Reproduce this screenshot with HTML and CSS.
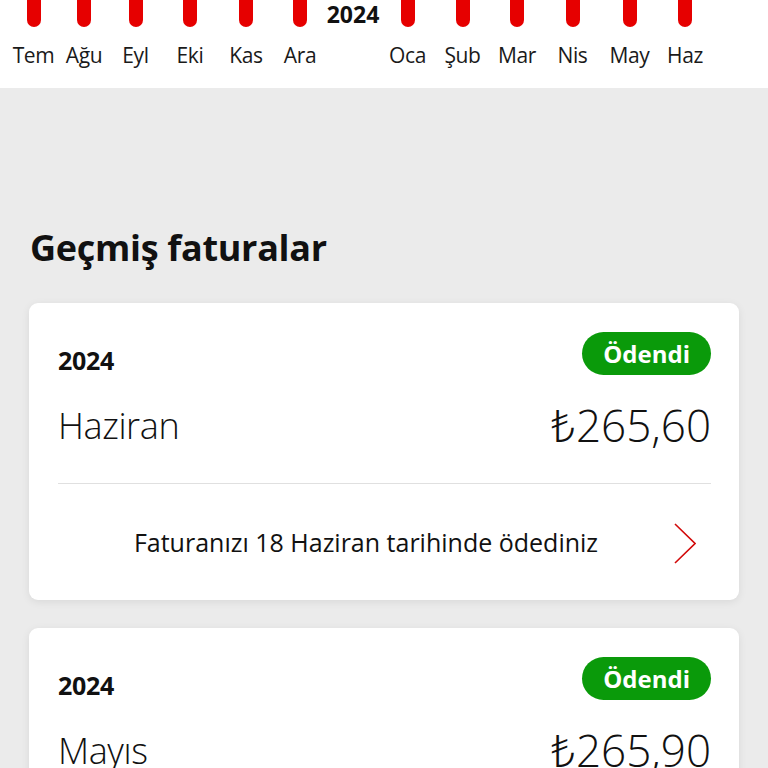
FILE: index.html
```html
<!DOCTYPE html>
<html lang="tr">
<head>
<meta charset="utf-8">
<title>Geçmiş faturalar</title>
<link rel="stylesheet" href="styles.css">
</head>
<body>
<header class="timeline">
  <div class="month"><span class="bar"></span><span class="label">Tem</span></div>
  <div class="month"><span class="bar"></span><span class="label">Ağu</span></div>
  <div class="month"><span class="bar"></span><span class="label">Eyl</span></div>
  <div class="month"><span class="bar"></span><span class="label">Eki</span></div>
  <div class="month"><span class="bar"></span><span class="label">Kas</span></div>
  <div class="month"><span class="bar"></span><span class="label">Ara</span></div>
  <div class="month year-col"><span class="year-mark">2024</span></div>
  <div class="month"><span class="bar"></span><span class="label">Oca</span></div>
  <div class="month"><span class="bar"></span><span class="label">Şub</span></div>
  <div class="month"><span class="bar"></span><span class="label">Mar</span></div>
  <div class="month"><span class="bar"></span><span class="label">Nis</span></div>
  <div class="month"><span class="bar"></span><span class="label">May</span></div>
  <div class="month"><span class="bar"></span><span class="label">Haz</span></div>
</header>

<main class="history">
  <h1 class="title">Geçmiş faturalar</h1>

  <section class="card">
    <div class="card-top">
      <span class="year">2024</span>
      <span class="badge">Ödendi</span>
    </div>
    <div class="card-main">
      <span class="month-name">Haziran</span>
      <span class="amount">₺265,60</span>
    </div>
    <div class="card-foot">
      <span class="paid-note">Faturanızı 18 Haziran tarihinde ödediniz</span>
      <svg class="chevron" width="22" height="42" viewBox="0 0 22 42"><polyline points="1,1 21,20.5 1,40" fill="none" stroke="#d20a0a" stroke-width="1.6"/></svg>
    </div>
  </section>

  <section class="card">
    <div class="card-top">
      <span class="year">2024</span>
      <span class="badge">Ödendi</span>
    </div>
    <div class="card-main">
      <span class="month-name">Mayıs</span>
      <span class="amount">₺265,90</span>
    </div>
    <div class="card-foot">
      <span class="paid-note">Faturanızı 18 Mayıs tarihinde ödediniz</span>
      <svg class="chevron" width="22" height="42" viewBox="0 0 22 42"><polyline points="1,1 21,20.5 1,40" fill="none" stroke="#d20a0a" stroke-width="1.6"/></svg>
    </div>
  </section>
</main>
</body>
</html>
```

FILE: styles.css
```css
* { box-sizing: border-box; }

html, body {
  margin: 0;
  padding: 0;
}

body {
  background: #ebebeb;
  font-family: "Open Sans", "Noto Sans", "DejaVu Sans", sans-serif;
  color: #1a1a1a;
  overflow: hidden;
}

.timeline {
  background: #ffffff;
  height: 88px;
  padding-left: 8px;
  display: grid;
  grid-template-columns: 51px 50px 53px 56px 56px 52px 54px 55px 55px 54px 57px 57px 54px;
}

.month {
  display: flex;
  flex-direction: column;
  align-items: center;
}

.bar {
  width: 14px;
  height: 27px;
  background: #e60000;
  border-radius: 0 0 7px 7px;
}

.label {
  margin-top: 15px;
  font-size: 21px;
  line-height: 26px;
  color: #1a1a1a;
  letter-spacing: -0.4px;
}

.year-mark {
  font-size: 23px;
  line-height: 28px;
  font-weight: 700;
  color: #111;
}

.history {
  padding: 138px 29px 0 29px;
}

.title {
  margin: 0 0 33px 1px;
  font-size: 36px;
  line-height: 44px;
  font-weight: 700;
  color: #111;
  letter-spacing: -0.3px;
}

.card {
  background: #ffffff;
  border-radius: 9px;
  box-shadow: 0 2px 8px rgba(0, 0, 0, 0.08);
  padding: 29px 28px 0 29px;
  margin-bottom: 28px;
}

.card-top {
  display: flex;
  justify-content: space-between;
  align-items: center;
  height: 43px;
}

.year {
  font-size: 25px;
  font-weight: 700;
  color: #111;
  margin-top: 13px;
  letter-spacing: -0.3px;
}

.badge {
  background: #0a9a0a;
  color: #ffffff;
  font-size: 24px;
  font-weight: 700;
  height: 43px;
  line-height: 43px;
  padding: 0 21px;
  border-radius: 22px;
}

.card-main {
  display: flex;
  justify-content: space-between;
  align-items: center;
  height: 52px;
  margin-top: 24px;
}

.month-name {
  font-size: 36px;
  font-weight: 300;
  color: #111;
  letter-spacing: -0.4px;
}

.amount {
  font-size: 44px;
  font-weight: 300;
  color: #111;
}

.card-foot {
  margin-top: 32px;
  border-top: 1px solid #e0e0e0;
  height: 117px;
  display: flex;
  align-items: center;
}

.paid-note {
  flex: 1;
  text-align: center;
  font-size: 25px;
  color: #111;
}

.chevron {
  margin-right: 15px;
  margin-top: 4px;
  flex: none;
}
```
